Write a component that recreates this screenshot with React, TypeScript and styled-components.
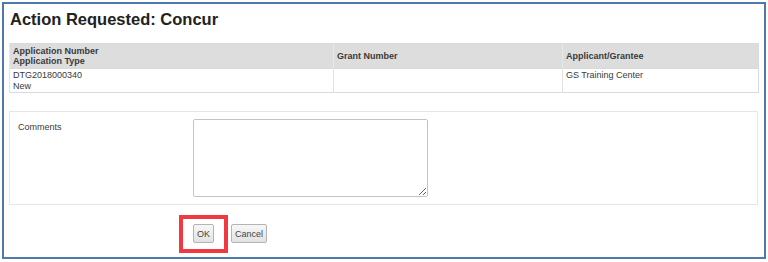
import styled, { createGlobalStyle } from "styled-components";

const GlobalStyle = createGlobalStyle`
  html, body {
    margin: 0;
    padding: 0;
    background: #ffffff;
  }
  body {
    font-family: "Liberation Sans", Arial, sans-serif;
    color: #333333;
  }
`;

const columns = [
  { key: "app", width: 324, head: ["Application Number", "Application Type"], body: ["DTG2018000340", "New"] },
  { key: "grant", width: 229, head: ["Grant Number"], body: [] as string[] },
  { key: "grantee", width: 196, head: ["Applicant/Grantee"], body: ["GS Training Center"] },
];

const App = () => {
  return (
    <>
      <GlobalStyle />
      <Frame>
        <Title>Action Requested: Concur</Title>

        <SummaryTable>
          <colgroup>
            {columns.map((c) => (
              <col key={c.key} style={{ width: c.width }} />
            ))}
          </colgroup>
          <thead>
            <tr>
              {columns.map((c) => (
                <HeadCell key={c.key}>
                  {c.head.map((line) => (
                    <div key={line}>{line}</div>
                  ))}
                </HeadCell>
              ))}
            </tr>
          </thead>
          <tbody>
            <tr>
              {columns.map((c) => (
                <BodyCell key={c.key}>
                  {c.body.map((line) => (
                    <div key={line}>{line}</div>
                  ))}
                </BodyCell>
              ))}
            </tr>
          </tbody>
        </SummaryTable>

        <CommentsPanel>
          <FieldLabel>Comments</FieldLabel>
          <CommentBox />
        </CommentsPanel>

        <ActionRow>
          <Highlight>
            <Button>OK</Button>
            <Marker />
          </Highlight>
          <Button>Cancel</Button>
        </ActionRow>
      </Frame>
    </>
  );
};

const Frame = styled.div`
  margin: 2px 2px 0 2px;
  height: 257px;
  box-sizing: border-box;
  border: 2px solid #4d79ab;
  padding: 5px 5px 0 5px;
  display: flex;
  flex-direction: column;
`;

const Title = styled.h1`
  margin: 0 0 0 1px;
  font-size: 16.5px;
  line-height: 20px;
  font-weight: bold;
  color: #222222;
`;

const SummaryTable = styled.table`
  margin-top: 14px;
  width: 749px;
  border-collapse: collapse;
  table-layout: fixed;
  font-size: 9px;
  line-height: 10.5px;
  border: 1px solid #dadada;
`;

const HeadCell = styled.th`
  background: #dddddd;
  height: 25px;
  box-sizing: border-box;
  padding: 1px 3px;
  text-align: left;
  vertical-align: middle;
  font-weight: bold;
  color: #3a3a3a;
  border-left: 1px solid #e8e8e8;
`;

const BodyCell = styled.td`
  height: 23px;
  box-sizing: border-box;
  padding: 1px 3px;
  vertical-align: top;
  color: #3a3a3a;
  border-left: 1px solid #e2e2e2;
  border-top: 1px solid #dadada;
`;

const CommentsPanel = styled.div`
  margin-top: 18px;
  width: 749px;
  height: 94px;
  box-sizing: border-box;
  border: 1px solid #e6e6e6;
  padding: 7px 0 6px 8px;
  display: grid;
  grid-template-columns: 175px 235px;
  align-items: start;
`;

const FieldLabel = styled.div`
  font-size: 9px;
  line-height: 11px;
  margin-top: 3px;
  color: #3a3a3a;
`;

const CommentBox = styled.textarea`
  width: 235px;
  height: 78px;
  box-sizing: border-box;
  margin: 0;
  border: 1px solid #c4c4c4;
  border-radius: 2px;
  background: #ffffff;
  outline: none;
`;

const ActionRow = styled.div`
  margin-top: 19px;
  padding-left: 184px;
  display: flex;
  gap: 17px;
  align-items: center;
`;

const Highlight = styled.div`
  position: relative;
  display: flex;
`;

const Marker = styled.div`
  position: absolute;
  left: -14px;
  top: -9px;
  width: 49px;
  height: 38px;
  box-sizing: border-box;
  border: 4px solid #ef3a42;
  pointer-events: none;
`;

const Button = styled.button`
  height: 19px;
  padding: 0 3px;
  min-width: 21px;
  font-family: "Liberation Sans", Arial, sans-serif;
  font-size: 9px;
  color: #444444;
  border: 1px solid #b4b4b4;
  border-radius: 2px;
  background: linear-gradient(#f7f7f7, #e2e2e2);
  cursor: pointer;
`;

export default App;
